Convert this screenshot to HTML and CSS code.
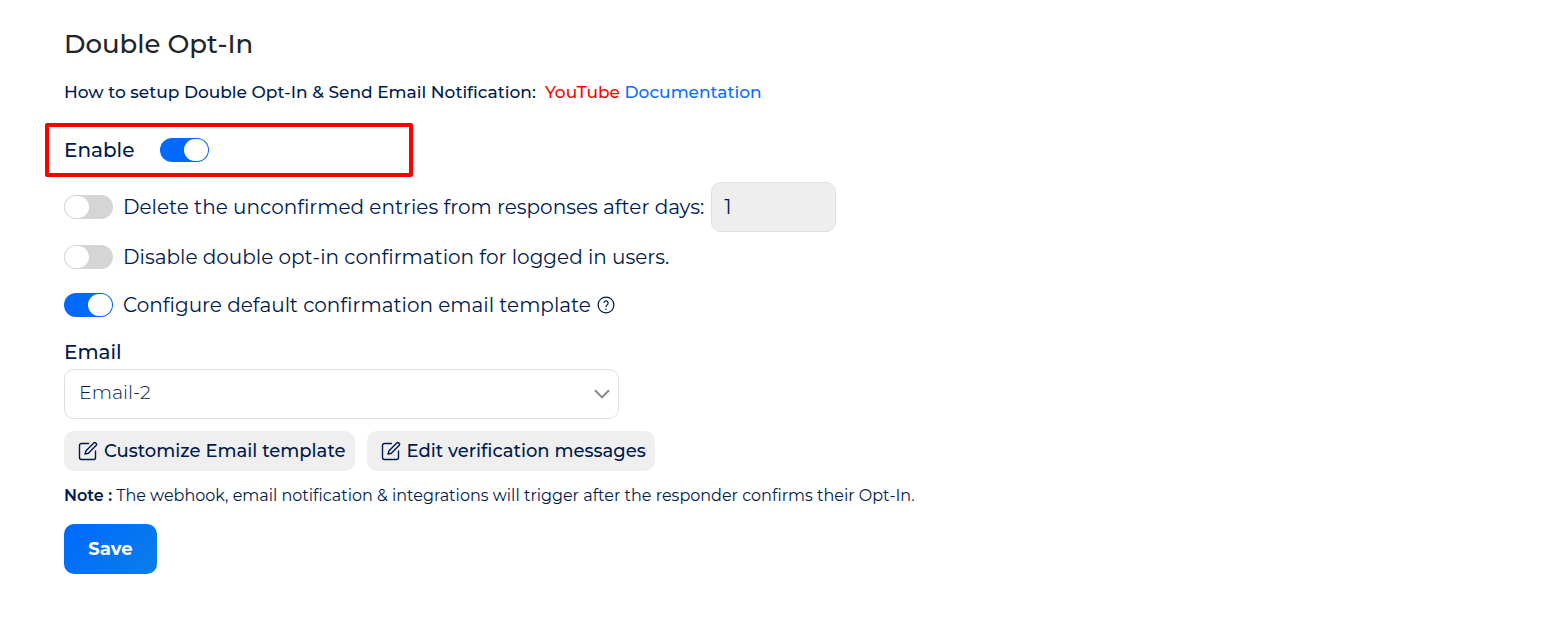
FILE: index.html
```html
<!DOCTYPE html>
<html lang="en">
<head>
<meta charset="utf-8">
<meta name="viewport" content="width=device-width, initial-scale=1">
<title>Double Opt-In</title>
<link rel="stylesheet" href="styles.css">
</head>
<body>
<svg class="sprite" aria-hidden="true">
  <symbol id="icon-edit" viewBox="0 0 20 20">
    <path d="M10.500 2.500H3.500a2 2 0 0 0-2 2v12a2 2 0 0 0 2 2h12a2 2 0 0 0 2-2V10"/>
    <path d="M8 9.800 15.600 2.200a1.700 1.700 0 0 1 2.400 0 1.700 1.700 0 0 1 0 2.400L10.400 12.200 7 13z"/>
  </symbol>
</svg>
<main class="settings">
  <h1 class="title">Double Opt-In</h1>
  <p class="help">How to setup Double Opt-In &amp; Send Email Notification:&nbsp; <a class="link-youtube" href="#youtube">YouTube</a> <a class="link-docs" href="#documentation">Documentation</a></p>
  <form class="form">
    <div class="row row-enable">
      <label class="enable-label" for="enable">Enable</label>
      <input class="switch" type="checkbox" role="switch" id="enable" checked>
    </div>
    <div class="row row-days">
      <input class="switch" type="checkbox" role="switch" id="delete">
      <label class="row-label" for="delete">Delete the unconfirmed entries from responses after days:</label>
      <input class="days" type="text" inputmode="numeric" aria-label="Days" value="1" disabled>
    </div>
    <div class="row row-logged">
      <input class="switch" type="checkbox" role="switch" id="logged">
      <label class="row-label" for="logged">Disable double opt-in confirmation for logged in users.</label>
    </div>
    <div class="row row-template">
      <input class="switch" type="checkbox" role="switch" id="template" checked>
      <label class="row-label" for="template">Configure default confirmation email template</label>
      <svg class="icon-help" viewBox="0 0 18 18" aria-hidden="true">
        <circle cx="9" cy="9" r="7.900"/>
        <path d="M6.900 7a2.100 2.100 0 1 1 3.500 1.600C9.500 9.400 9 9.900 9 11"/>
        <path d="M9 12.600v1.300"/>
      </svg>
    </div>
    <label class="field-label" for="email">Email</label>
    <div class="select-wrap">
      <select class="select" id="email"><option>Email-2</option></select>
      <svg class="chevron" viewBox="0 0 16 10" aria-hidden="true"><path d="m1 1.200 7 7.200 7-7.200"/></svg>
    </div>
    <div class="actions">
      <button class="button" type="button"><svg class="icon-edit" aria-hidden="true"><use href="#icon-edit"/></svg>Customize Email template</button>
      <button class="button" type="button"><svg class="icon-edit" aria-hidden="true"><use href="#icon-edit"/></svg>Edit verification messages</button>
    </div>
    <p class="note"><strong class="note-title">Note :</strong> The webhook, email notification &amp; integrations will trigger after the responder confirms their Opt-In.</p>
    <button class="save" type="button">Save</button>
  </form>
</main>
</body>
</html>
```
FILE: styles.css
```css
*,
*::before {
  box-sizing: border-box;
}

body {
  margin: 0;
  background: #fff;
  color: #001a4c;
  font-family: Montserrat, Inter, "Open Sans", sans-serif;
  font-size: 20px;
  font-weight: 400;
  line-height: 24px;
}

button,
input,
select {
  margin: 0;
  color: inherit;
  font: inherit;
}

.sprite {
  display: none;
}

.settings {
  padding: 28px 64px 69px;
}

.title {
  margin: 0;
  color: #212529;
  font-size: 26px;
  font-weight: 500;
  line-height: 32px;
}

.help {
  margin: 20px 0 34px;
  font-size: 17px;
  font-weight: 500;
}

.help a {
  text-decoration: none;
}

.link-youtube {
  color: #f00;
}

.link-docs {
  color: #0d6efd;
}

.form {
  display: flex;
  flex-direction: column;
  align-items: flex-start;
}

.row {
  display: flex;
  align-items: center;
}

.row-enable {
  position: relative;
  gap: 26px;
  margin-bottom: 20px;
}

/* Outline that draws attention to the main switch */
.row-enable::before {
  content: "";
  position: absolute;
  top: -15px;
  left: -19px;
  width: 368px;
  height: 54px;
  border: 4px solid #f00;
  border-radius: 2px;
  pointer-events: none;
}

.enable-label,
.field-label {
  font-weight: 500;
}

.row-days {
  margin-bottom: 13px;
}

.row-logged {
  margin-bottom: 24px;
}

.row-template {
  margin-bottom: 23px;
}

.row-label {
  margin-left: 10px;
}

.switch {
  appearance: none;
  display: flex;
  flex: none;
  width: 49px;
  height: 24px;
  padding: 1px;
  border-radius: 12px;
  background: #d5d5d5;
}

.switch::before {
  content: "";
  width: 24px;
  height: 22px;
  border-radius: 12px;
  background: #fff;
}

.switch:checked {
  justify-content: flex-end;
  background: #0069ff;
}

.days {
  width: 125px;
  height: 50px;
  margin-left: 7px;
  padding: 0 12px;
  border: 1px solid #e0e0e0;
  border-radius: 10px;
  background: #eee;
}

.icon-help {
  width: 18px;
  height: 18px;
  margin-left: 6px;
  fill: none;
  stroke: #001a4c;
  stroke-width: 1.2;
}

.field-label {
  margin-bottom: 5px;
}

.select-wrap {
  position: relative;
  width: 100%;
  max-width: 555px;
  margin-bottom: 12px;
}

.select {
  appearance: none;
  display: block;
  width: 100%;
  height: 50px;
  padding: 0 40px 2px 14px;
  border: 1px solid #dee0e2;
  border-radius: 10px;
  background: #fff;
  font-size: 19px;
  font-weight: 300;
}

.chevron {
  position: absolute;
  top: 20px;
  right: 9px;
  width: 16px;
  height: 10px;
  fill: none;
  stroke: #888;
  stroke-width: 2;
  pointer-events: none;
}

.actions {
  display: flex;
  flex-wrap: wrap;
  gap: 12px;
  margin-bottom: 13px;
}

.button {
  display: flex;
  align-items: center;
  gap: 6px;
  height: 40px;
  padding: 0 9px 0 14px;
  border: 0;
  border-radius: 10px;
  background: #efefef;
  font-size: 18px;
  font-weight: 500;
}

.icon-edit {
  width: 20px;
  height: 20px;
  fill: none;
  stroke: #001a4c;
  stroke-width: 1.4;
  stroke-linecap: round;
  stroke-linejoin: round;
}

.note {
  margin: 0 0 16px;
  font-size: 16px;
}

.note-title {
  font-weight: 600;
}

.save {
  min-width: 93px;
  height: 50px;
  padding: 0 24px;
  border: 0;
  border-radius: 10px;
  background: linear-gradient(135deg, #0069ff, #0a7ee8);
  color: #fff;
  font-size: 18px;
  font-weight: 700;
}
```
